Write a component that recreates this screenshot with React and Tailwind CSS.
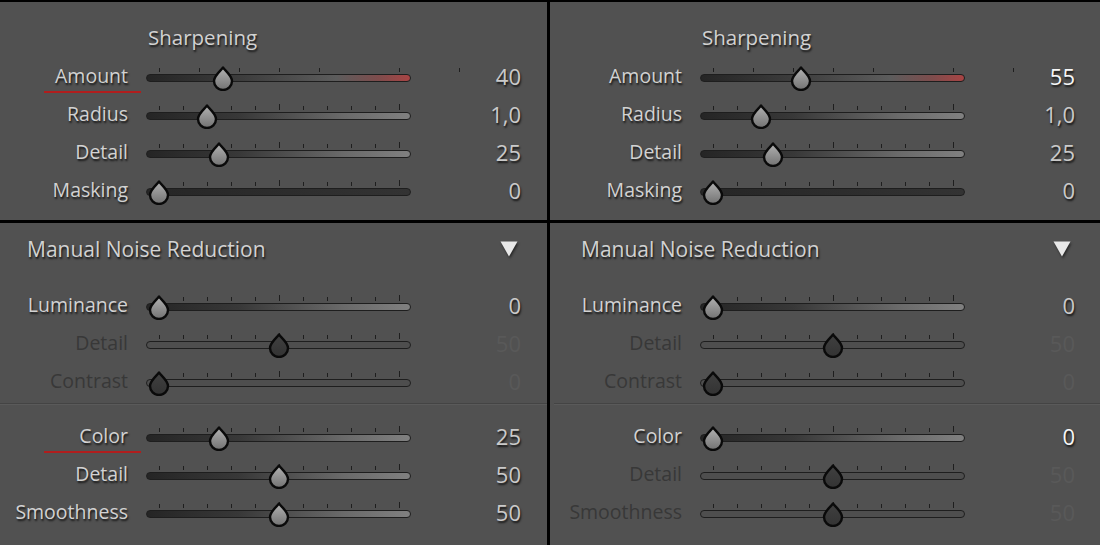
import React from "react";

const FONT = "font-['Open_Sans',sans-serif]";
const SHADOW = "[text-shadow:1px_2px_2px_rgba(0,0,0,0.75)]";

const TRACKS = {
  grad: "bg-[linear-gradient(to_right,#252525,#383838_35%,#6a6a6a_75%,#808080)]",
  amount: "bg-[linear-gradient(to_right,#252525,#3c3c3c_35%,#5c5c5c_72%,#7e4c4c_88%,#a84444)]",
  dark: "bg-[linear-gradient(to_right,#262626,#333333)]",
  off: "bg-[#4e4e4e]",
};

// tick x positions inside the slider box (thumb range is 13..253)
const regularTicks = [0, 1, 2, 3, 4, 5, 6, 7, 8, 9, 10].map((i) => ({ x: 13 + i * 24, major: i === 5 || i === 10 }));
const amountTicks = [13, 53, 93, 133, 173, 253, 313].map((x) => ({ x, major: false }));

const sharpeningLeft = [
  { label: "Amount", value: "40", pos: 40 / 150, track: "amount", ticks: amountTicks, mark: true },
  { label: "Radius", value: "1,0", pos: 0.2, track: "grad" },
  { label: "Detail", value: "25", pos: 0.25, track: "grad" },
  { label: "Masking", value: "0", pos: 0, track: "dark" },
];

const sharpeningRight = [
  { label: "Amount", value: "55", pos: 55 / 150, track: "amount", ticks: amountTicks, bright: true },
  { label: "Radius", value: "1,0", pos: 0.2, track: "grad" },
  { label: "Detail", value: "25", pos: 0.25, track: "grad" },
  { label: "Masking", value: "0", pos: 0, track: "dark" },
];

const noiseLeft = [
  [
    { label: "Luminance", value: "0", pos: 0, track: "grad" },
    { label: "Detail", value: "50", pos: 0.5, track: "off", off: true },
    { label: "Contrast", value: "0", pos: 0, track: "off", off: true },
  ],
  [
    { label: "Color", value: "25", pos: 0.25, track: "grad", mark: true },
    { label: "Detail", value: "50", pos: 0.5, track: "grad" },
    { label: "Smoothness", value: "50", pos: 0.5, track: "grad" },
  ],
];

const noiseRight = [
  [
    { label: "Luminance", value: "0", pos: 0, track: "grad" },
    { label: "Detail", value: "50", pos: 0.5, track: "off", off: true },
    { label: "Contrast", value: "0", pos: 0, track: "off", off: true },
  ],
  [
    { label: "Color", value: "0", pos: 0, track: "grad", bright: true },
    { label: "Detail", value: "50", pos: 0.5, track: "off", off: true },
    { label: "Smoothness", value: "50", pos: 0.5, track: "off", off: true },
  ],
];

const Thumb = ({ off }) => (
  <svg width="22" height="25" viewBox="0 0 22 25" className="block">
    <defs>
      <linearGradient id={off ? "thumbOff" : "thumbOn"} x1="0" y1="0" x2="0" y2="1">
        <stop offset="0" stopColor={off ? "#404040" : "#b2b2b2"} />
        <stop offset="1" stopColor={off ? "#333333" : "#727272"} />
      </linearGradient>
    </defs>
    <path
      d="M11 1.5 C9 4.5 2 9.6 2 15 A9 9 0 0 0 20 15 C20 9.6 13 4.5 11 1.5 Z"
      fill={`url(#${off ? "thumbOff" : "thumbOn"})`}
      stroke="#0a0a0a"
      strokeWidth="2.4"
      strokeLinejoin="round"
    />
  </svg>
);

const Slider = ({ row }) => {
  const ticks = row.ticks || regularTicks;
  return (
    <div className="relative w-[265px] h-[26px] shrink-0">
      {ticks.map((t, i) => (
        <div
          key={i}
          className={`absolute w-px bg-[#1e1e1e] ${t.major ? "top-[1px] h-[6px]" : "top-[3px] h-[4px]"}`}
          style={{ left: t.x }}
        />
      ))}
      <div
        className={`absolute left-0 right-0 top-[9px] h-[8px] rounded-full border-[1.5px] border-[#1e1e1e] ${TRACKS[row.track]}`}
      />
      <div className="absolute top-[1px]" style={{ left: 2 + row.pos * 240 }}>
        <Thumb off={row.off} />
      </div>
    </div>
  );
};

const Row = ({ row }) => {
  const labelColor = row.off ? "text-[#383838]" : `text-[#d2d2d2] ${SHADOW}`;
  const valueColor = row.off
    ? "text-[#595959]"
    : row.bright
    ? `text-[#f6f6f6] ${SHADOW}`
    : `text-[#cacaca] ${SHADOW}`;
  return (
    <div className="relative flex items-center h-[38px]">
      <div className={`w-[128px] pb-[4px] text-right text-[19.5px] leading-none ${labelColor}`}>{row.label}</div>
      {row.mark && <div className="absolute left-[44px] top-[32px] w-[97px] h-[2px] bg-[#b01d1d]" />}
      <div className="ml-[18px]">
        <Slider row={row} />
      </div>
      <div className={`w-[110px] pb-[4px] text-right text-[22px] leading-none ${valueColor}`}>{row.value}</div>
    </div>
  );
};

const Column = ({ sharpening, noise, className }) => (
  <div className={`flex flex-col gap-[3px] ${className}`}>
    <div className="h-[218px] bg-[#515151] pt-[20px]">
      <div className={`pl-[148px] h-[30px] flex items-center text-[20.5px] text-[#d2d2d2] ${SHADOW}`}>
        Sharpening
      </div>
      <div className="mt-[7px]">
        {sharpening.map((r) => (
          <Row key={r.label} row={r} />
        ))}
      </div>
    </div>
    <div className="flex-1 bg-[#515151] pt-[12px]">
      <div className="flex items-center justify-between h-[30px] pl-[27px] pr-[29px]">
        <span className={`text-[21px] text-[#d2d2d2] ${SHADOW}`}>Manual Noise Reduction</span>
        <svg width="18" height="16" viewBox="0 0 18 16" className="-mt-[2px] drop-shadow-[1px_2px_1px_rgba(0,0,0,0.5)]">
          <polygon points="0.5,0.5 17.5,0.5 9,15.5" fill="#e8e8e8" />
        </svg>
      </div>
      <div className="mt-[23px]">
        {noise[0].map((r, i) => (
          <Row key={i} row={r} />
        ))}
      </div>
      <div className="mt-px h-px bg-[#444444] border-b border-[#5a5a5a] box-content" />
      <div className="mt-[14px]">
        {noise[1].map((r, i) => (
          <Row key={i} row={r} />
        ))}
      </div>
    </div>
  </div>
);

export default function App() {
  return (
    <div className={`w-[1100px] h-[545px] bg-black pt-[2px] flex gap-[3px] overflow-hidden ${FONT}`}>
      <Column sharpening={sharpeningLeft} noise={noiseLeft} className="w-[547px]" />
      <Column sharpening={sharpeningRight} noise={noiseRight} className="w-[550px] [&>div]:pl-[4px]" />
    </div>
  );
}
